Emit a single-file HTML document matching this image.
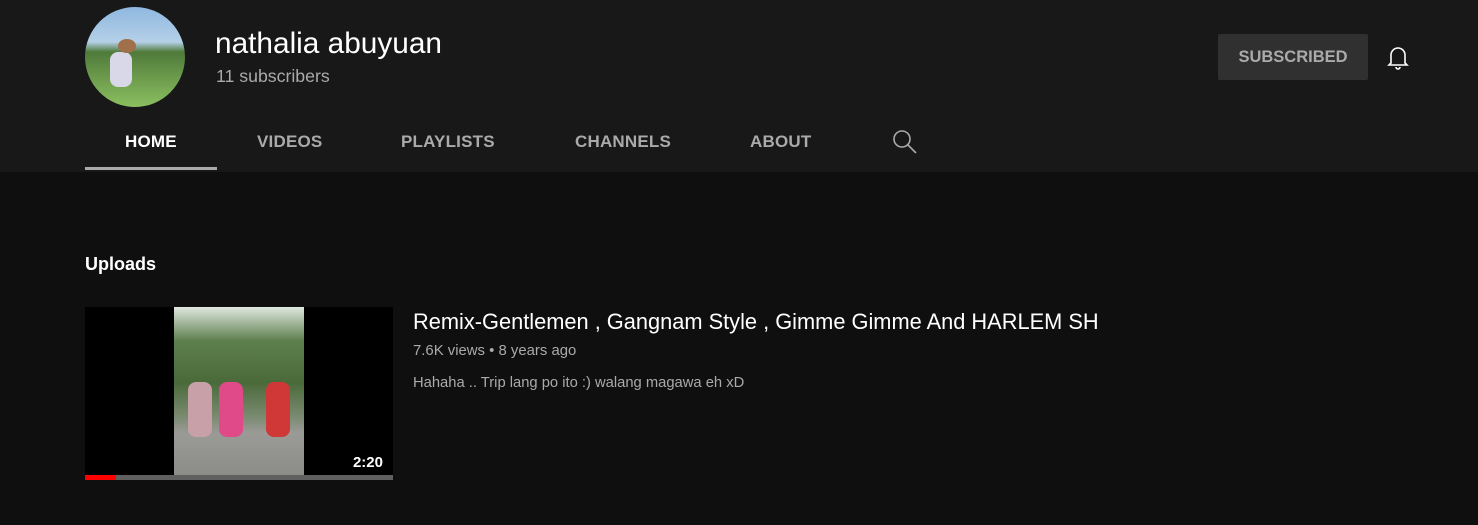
<!DOCTYPE html>
<html><head><meta charset="utf-8"><style>
*{margin:0;padding:0;box-sizing:border-box}
body{width:1478px;height:525px;background:#0f0f0f;font-family:"Liberation Sans",Arial,sans-serif;position:relative;overflow:hidden;color:#fff}
.hdr{position:absolute;left:0;top:0;width:1478px;height:172px;background:#181818}
.av{position:absolute;left:85px;top:7px;width:100px;height:100px;border-radius:50%;overflow:hidden;background:linear-gradient(#8fb8e0 0%,#b5d0e8 35%,#4f7a3a 45%,#6c9a4c 70%,#8bc060 100%)}
.av i{position:absolute;left:25px;top:45px;width:22px;height:35px;background:#d8d8e8;border-radius:8px}
.av b{position:absolute;left:33px;top:32px;width:18px;height:14px;background:#a0704a;border-radius:50%}
.name{position:absolute;left:215px;top:27px;font-size:29.8px}
.subs{position:absolute;left:216px;top:66px;font-size:17.7px;color:#aaa}
.btn{position:absolute;left:1218px;top:34px;width:150px;height:46px;background:#303030;border-radius:2px;color:#aaa;font-size:16.5px;font-weight:bold;text-align:center;line-height:46px}
.bell{position:absolute;left:1386px;top:44px}
.tab{position:absolute;top:132px;font-size:17px;font-weight:bold;color:#aaa;letter-spacing:.2px}
.ul{position:absolute;left:85px;top:167px;width:132px;height:3px;background:#aaa}
.up{position:absolute;left:85px;top:254px;font-size:18px;font-weight:bold}
.th{position:absolute;left:85px;top:307px;width:308px;height:173px;background:#000}
.img{position:absolute;left:89px;top:0;width:130px;height:168px;background:linear-gradient(#e0e8e0 0%,#5e7f4e 20%,#4a6a3a 45%,#7a8a70 65%,#9a9a96 75%,#8c8c88 100%)}
.p{position:absolute;top:75px;width:24px;height:55px;border-radius:8px}
.dur{position:absolute;right:10px;top:147px;font-size:15px;font-weight:bold}
.bar{position:absolute;left:0;top:168px;width:308px;height:5px;background:#606060}
.bar i{display:block;width:31px;height:5px;background:#f00}
.t{position:absolute;left:413px;top:309px;font-size:21.8px}
.m{position:absolute;left:413px;top:343px;font-size:14.9px;color:#aaa}
.d{position:absolute;left:413px;top:375px;font-size:14.75px;color:#aaa}
</style></head><body>
<div class="hdr">
<div class="av"><i></i><b></b></div>
<div class="name">nathalia abuyuan</div>
<div class="subs">11 subscribers</div>
<div class="btn">SUBSCRIBED</div>
<svg class="bell" width="24" height="26" viewBox="0 0 24 26" fill="none" stroke="#fff" stroke-width="1.6"><path d="M5 19V11a7 7 0 0 1 14 0v8l2 2H3z"/><path d="M10 23a2 2 0 0 0 4 0"/></svg>
<div class="tab" style="left:125px;color:#fff">HOME</div>
<div class="tab" style="left:257px">VIDEOS</div>
<div class="tab" style="left:401px">PLAYLISTS</div>
<div class="tab" style="left:575px">CHANNELS</div>
<div class="tab" style="left:750px">ABOUT</div>
<svg style="position:absolute;left:892px;top:129px" width="26" height="26" viewBox="0 0 26 26" fill="none" stroke="#aaa" stroke-width="1.6"><circle cx="10" cy="10" r="8"/><path d="M16 16l8 8"/></svg>
<div class="ul"></div>
</div>
<div class="up">Uploads</div>
<div class="th">
<div class="img">
<div class="p" style="left:14px;background:#c8a0a8"></div>
<div class="p" style="left:45px;background:#e04a88"></div>
<div class="p" style="left:92px;background:#d03838"></div>
</div>
<div class="dur">2:20</div>
<div class="bar"><i></i></div>
</div>
<div class="t">Remix-Gentlemen , Gangnam Style , Gimme Gimme And HARLEM SH</div>
<div class="m">7.6K views • 8 years ago</div>
<div class="d">Hahaha .. Trip lang po ito :) walang magawa eh xD</div>
</body></html>
